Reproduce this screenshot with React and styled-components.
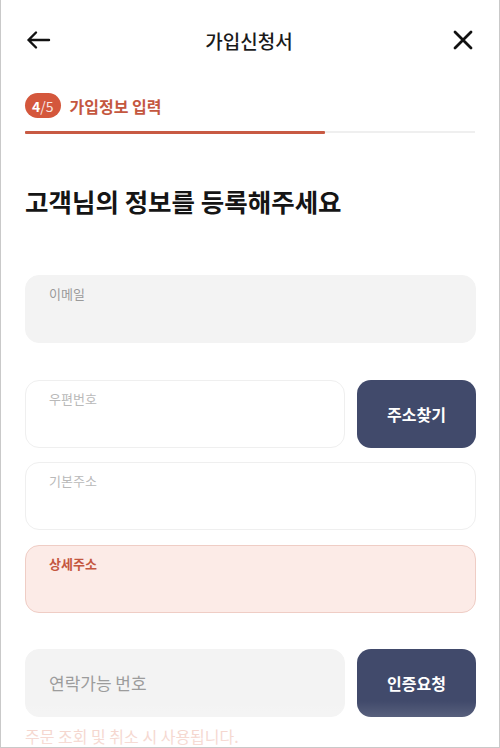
import React from "react";
import styled, { createGlobalStyle } from "styled-components";

const GlobalStyle = createGlobalStyle`
  * { box-sizing: border-box; }
  body {
    margin: 0;
    background: #ffffff;
    font-family: "Noto Sans CJK KR", "Noto Sans", sans-serif;
  }
`;

const Screen = styled.div`
  position: relative;
  width: 500px;
  height: 748px;
  overflow: hidden;
  background: #ffffff;
  border-left: 1px solid #c9c9c9;
  border-right: 1px solid #c9c9c9;
  border-bottom: 1px solid #c9c9c9;
  padding: 0 23px 0 24px;
`;

const Header = styled.div`
  height: 80px;
  display: flex;
  align-items: center;
  justify-content: space-between;
`;

const IconButton = styled.button`
  width: 26px;
  height: 26px;
  padding: 0;
  border: none;
  background: none;
  display: flex;
  align-items: center;
  justify-content: center;
  color: #111;
`;

const Title = styled.h1`
  margin: 0 0 0 -3px;
  font-size: 19px;
  font-weight: 500;
  color: #1a1a1a;
`;

const StepRow = styled.div`
  display: flex;
  align-items: center;
  gap: 9px;
  margin-top: 13px;
`;

const Badge = styled.span`
  height: 25px;
  padding: 0 7px;
  border-radius: 13px;
  background: #d4573c;
  color: #fff;
  font-size: 14px;
  font-weight: 700;
  display: flex;
  align-items: center;
  & > em {
    font-style: normal;
    font-weight: 400;
    opacity: 0.85;
  }
`;

const StepLabel = styled.span`
  font-size: 16px;
  font-weight: 700;
  color: #c4573f;
`;

const Track = styled.div`
  height: 2px;
  margin: 13px 1px 0 0;
  background: #efefef;
`;

const Fill = styled.div`
  height: 3px;
  margin-top: -0.5px;
  background: #c85a43;
  border-radius: 1px;
`;

const Heading = styled.h2`
  margin: 51px 0 0 0;
  font-size: 25.5px;
  font-weight: 700;
  color: #151515;
  line-height: 34px;
`;

const Form = styled.div`
  display: flex;
  flex-direction: column;
  margin-top: 57px;
`;

const Row = styled.div`
  display: flex;
  gap: 12px;
  margin-top: ${(p) => p.$top || 0}px;
`;

const variants = {
  gray: { bg: "#f3f3f3", border: "#f3f3f3", label: "#9a9a9a", weight: 400 },
  white: { bg: "#ffffff", border: "#efefef", label: "#b9b9b9", weight: 400 },
  focus: { bg: "#fcebe7", border: "#efcdc5", label: "#c4573f", weight: 700 },
};

const Field = styled.div`
  flex: 1;
  height: 68px;
  border-radius: 14px;
  background: ${(p) => variants[p.$v].bg};
  border: 1px solid ${(p) => variants[p.$v].border};
  padding: 8px 23px;
  display: flex;
  flex-direction: column;
  justify-content: ${(p) => (p.$center ? "center" : "flex-start")};
`;

const Label = styled.span`
  font-size: 13px;
  line-height: 19px;
  color: ${(p) => variants[p.$v].label};
  font-weight: ${(p) => variants[p.$v].weight};
`;

const Placeholder = styled.span`
  font-size: 17px;
  color: #9c9c9c;
`;

const ActionButton = styled.button`
  width: 119px;
  height: 68px;
  flex-shrink: 0;
  border: none;
  border-radius: 14px;
  background: #414a6b;
  color: #ffffff;
  font-family: inherit;
  font-size: 16px;
  font-weight: 700;
`;

const Helper = styled.p`
  margin: 7px 0 0 0;
  font-size: 16px;
  color: #f2cbc1;
`;

const Fade = styled.div`
  position: absolute;
  left: 0;
  right: 0;
  bottom: 0;
  height: 46px;
  background: linear-gradient(rgba(255, 255, 255, 0), rgba(255, 255, 255, 0.35));
  pointer-events: none;
`;

const BackIcon = () => (
  <svg width="25" height="20" viewBox="0 0 25 20" fill="none" stroke="currentColor" strokeWidth="2.4" strokeLinecap="round" strokeLinejoin="round">
    <path d="M23 10H2.5M10 2.5L2.5 10L10 17.5" />
  </svg>
);

const CloseIcon = () => (
  <svg width="20" height="20" viewBox="0 0 20 20" fill="none" stroke="currentColor" strokeWidth="2.8" strokeLinecap="round">
    <path d="M2 2L18 18M18 2L2 18" />
  </svg>
);

const App = () => {
  const progress = 4 / 5;
  return (
    <>
      <GlobalStyle />
      <Screen>
        <Header>
          <IconButton aria-label="뒤로">
            <BackIcon />
          </IconButton>
          <Title>가입신청서</Title>
          <IconButton aria-label="닫기">
            <CloseIcon />
          </IconButton>
        </Header>

        <StepRow>
          <Badge>
            4<em>/5</em>
          </Badge>
          <StepLabel>가입정보 입력</StepLabel>
        </StepRow>
        <Track>
          <Fill style={{ width: `${(progress - 0.133) * 100}%` }} />
        </Track>

        <Heading>고객님의 정보를 등록해주세요</Heading>

        <Form>
          <Row>
            <Field $v="gray">
              <Label $v="gray">이메일</Label>
            </Field>
          </Row>
          <Row $top={37}>
            <Field $v="white">
              <Label $v="white">우편번호</Label>
            </Field>
            <ActionButton>주소찾기</ActionButton>
          </Row>
          <Row $top={14}>
            <Field $v="white">
              <Label $v="white">기본주소</Label>
            </Field>
          </Row>
          <Row $top={15}>
            <Field $v="focus">
              <Label $v="focus">상세주소</Label>
            </Field>
          </Row>
          <Row $top={36}>
            <Field $v="gray" $center>
              <Placeholder>연락가능 번호</Placeholder>
            </Field>
            <ActionButton>인증요청</ActionButton>
          </Row>
          <Helper>주문 조회 및 취소 시 사용됩니다.</Helper>
        </Form>
        <Fade />
      </Screen>
    </>
  );
};

export default App;
